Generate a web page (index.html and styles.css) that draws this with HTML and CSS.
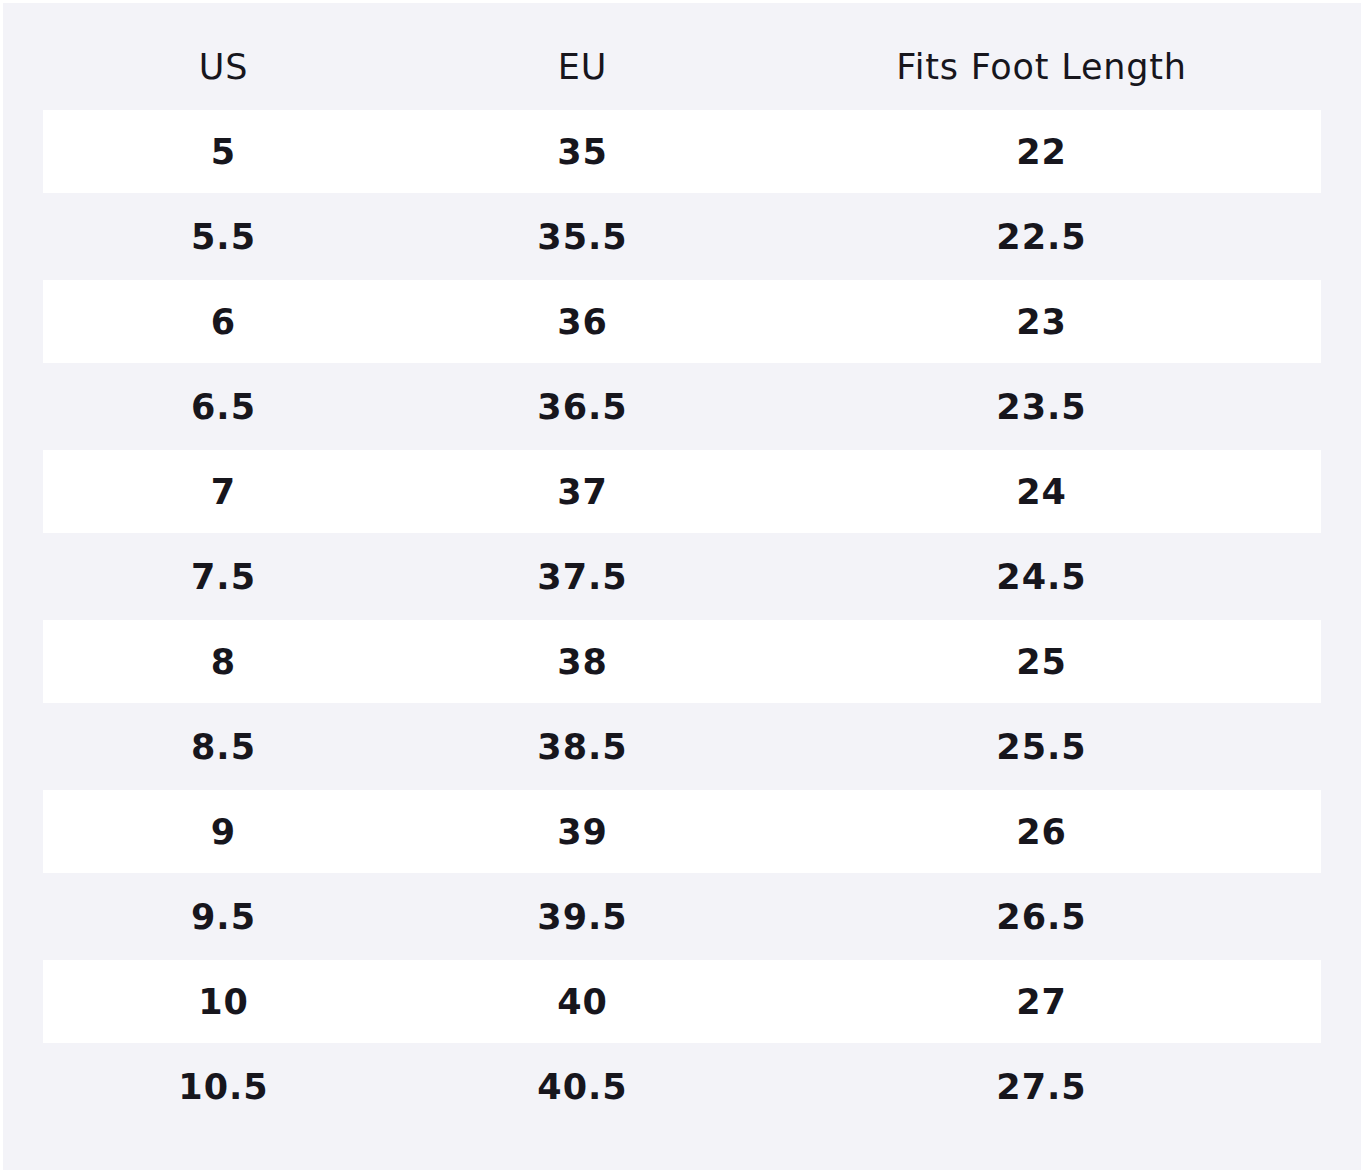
FILE: index.html
```html
<!DOCTYPE html>
<html lang="en">
<head>
<meta charset="utf-8">
<title>Size Chart</title>
<link rel="stylesheet" href="styles.css">
</head>
<body>
<div class="panel">
  <table class="sizes">
    <colgroup>
      <col class="c-us"><col class="c-eu"><col class="c-len">
    </colgroup>
    <thead>
      <tr><th>US</th><th>EU</th><th>Fits Foot Length</th></tr>
    </thead>
    <tbody>
      <tr><td>5</td><td>35</td><td>22</td></tr>
      <tr><td>5.5</td><td>35.5</td><td>22.5</td></tr>
      <tr><td>6</td><td>36</td><td>23</td></tr>
      <tr><td>6.5</td><td>36.5</td><td>23.5</td></tr>
      <tr><td>7</td><td>37</td><td>24</td></tr>
      <tr><td>7.5</td><td>37.5</td><td>24.5</td></tr>
      <tr><td>8</td><td>38</td><td>25</td></tr>
      <tr><td>8.5</td><td>38.5</td><td>25.5</td></tr>
      <tr><td>9</td><td>39</td><td>26</td></tr>
      <tr><td>9.5</td><td>39.5</td><td>26.5</td></tr>
      <tr><td>10</td><td>40</td><td>27</td></tr>
      <tr><td>10.5</td><td>40.5</td><td>27.5</td></tr>
    </tbody>
  </table>
</div>
</body>
</html>
```
FILE: styles.css
```css
html, body {
  background: #ffffff;
}
body {
  margin: 3px;
  font-family: "DejaVu Sans", "Liberation Sans", sans-serif;
  color: #17161d;
}
.panel {
  background: #f3f3f8;
  padding: 20px 40px 40px;
  height: 1167px;
  box-sizing: border-box;
}
.sizes {
  width: 1278px;
  border-collapse: collapse;
  table-layout: fixed;
}
.c-us { width: 360px; }
.c-eu { width: 358px; }
.c-len { width: 560px; }
.sizes th {
  height: 87px;
  padding: 0 0 0 1px;
  font-weight: normal;
  font-size: 35px;
  letter-spacing: 0.8px;
  text-align: center;
  vertical-align: middle;
}
.sizes td {
  padding: 0 0 0 1px;
  font-weight: bold;
  font-size: 35px;
  letter-spacing: 1px;
  text-align: center;
  vertical-align: middle;
}
.sizes tbody tr:nth-child(odd) td {
  background: #ffffff;
  height: 83px;
}
.sizes tbody tr:nth-child(even) td {
  height: 87px;
}
```
